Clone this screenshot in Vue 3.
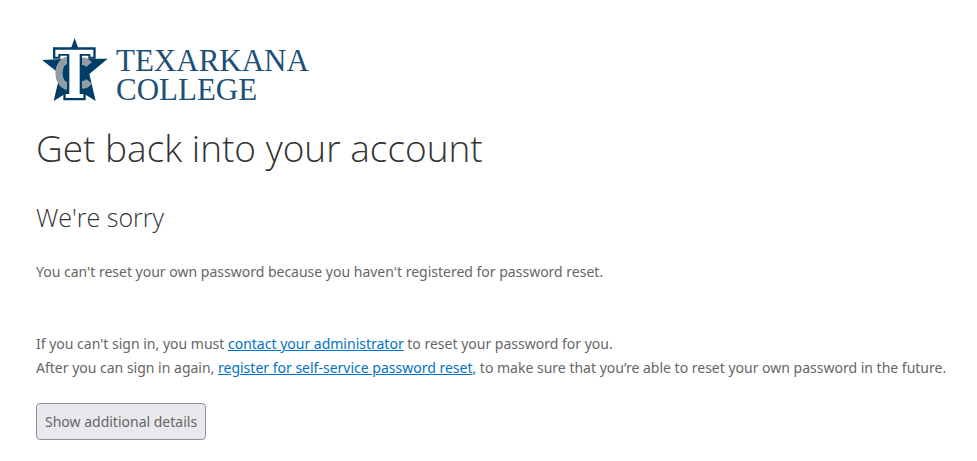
<script setup>
import { ref } from 'vue'

const showDetails = ref(false)
</script>

<template>
  <main class="page">
    <div class="brand">
      <svg class="emblem" viewBox="0 0 198 192" aria-hidden="true">
        <path fill="#003d69" d="M98 0L120 62H197L142 108L161 189L98 150L35 189L54 108L0 66L76 62Z" />
        <path fill="none" stroke="#939ba3" stroke-width="22" d="M78 66C42 72 42 138 78 145M113 73Q128 64 141 80M113 137Q128 147 141 130" />
        <path fill="#fff" stroke="#003d69" stroke-width="14" d="M40 35H154V55H146V46H113V168H124V180H71V168H82V46H48V55H40Z" />
        <path fill="#fff" d="M40 35H154V56H145V48H113V168H124V180H71V168H82V48H49V56H40Z" />
      </svg>
      <div class="wordmark"><span>TEXARKANA</span><span>COLLEGE</span></div>
    </div>
    <h1>Get back into your account</h1>
    <h2>We're sorry</h2>
    <p class="reason">You can't reset your own password because you haven't registered for password reset.</p>
    <p class="help">
      If you can't sign in, you must <a href="#">contact your administrator</a> to reset your password for you.<br>
      After you can sign in again, <a href="#">register for self-service password reset</a>, to make sure that you’re able to reset your own password in the future.
    </p>
    <button type="button" :aria-expanded="showDetails" @click="showDetails = !showDetails">Show additional details</button>
  </main>
</template>

<style>
body {
  margin: 0;
  background: #fff;
}
</style>

<style scoped>
.page {
  padding: 36px 8px 20px 36px;
  color: #666;
  font: 14px/24px "Noto Sans", "Open Sans", sans-serif;
}
.brand {
  display: flex;
  gap: 8px;
  height: 72px;
  padding-left: 6px;
}
.emblem {
  width: 66px;
  height: 64px;
  margin-top: 2px;
}
.wordmark {
  display: flex;
  flex-direction: column;
  padding-top: 10px;
  color: #1d4f78;
  font: 31px/29px "Liberation Serif", serif;
}
h1,
h2 {
  margin: 0;
  color: #333;
  font-family: "Open Sans", sans-serif;
  font-weight: 300;
}
h1 {
  font-size: 37px;
  line-height: 80px;
}
h2 {
  font-size: 25px;
  line-height: 58px;
}
p {
  margin: 0;
}
.reason {
  padding: 14px 0 48px;
}
.help {
  padding-bottom: 23px;
}
a {
  color: #0072c6;
  text-decoration: underline;
}
button {
  height: 37px;
  padding: 0 8px;
  border: 1px solid #8f8f9d;
  border-radius: 4px;
  background: #e9e9ed;
  color: #666;
  font: inherit;
}
</style>
